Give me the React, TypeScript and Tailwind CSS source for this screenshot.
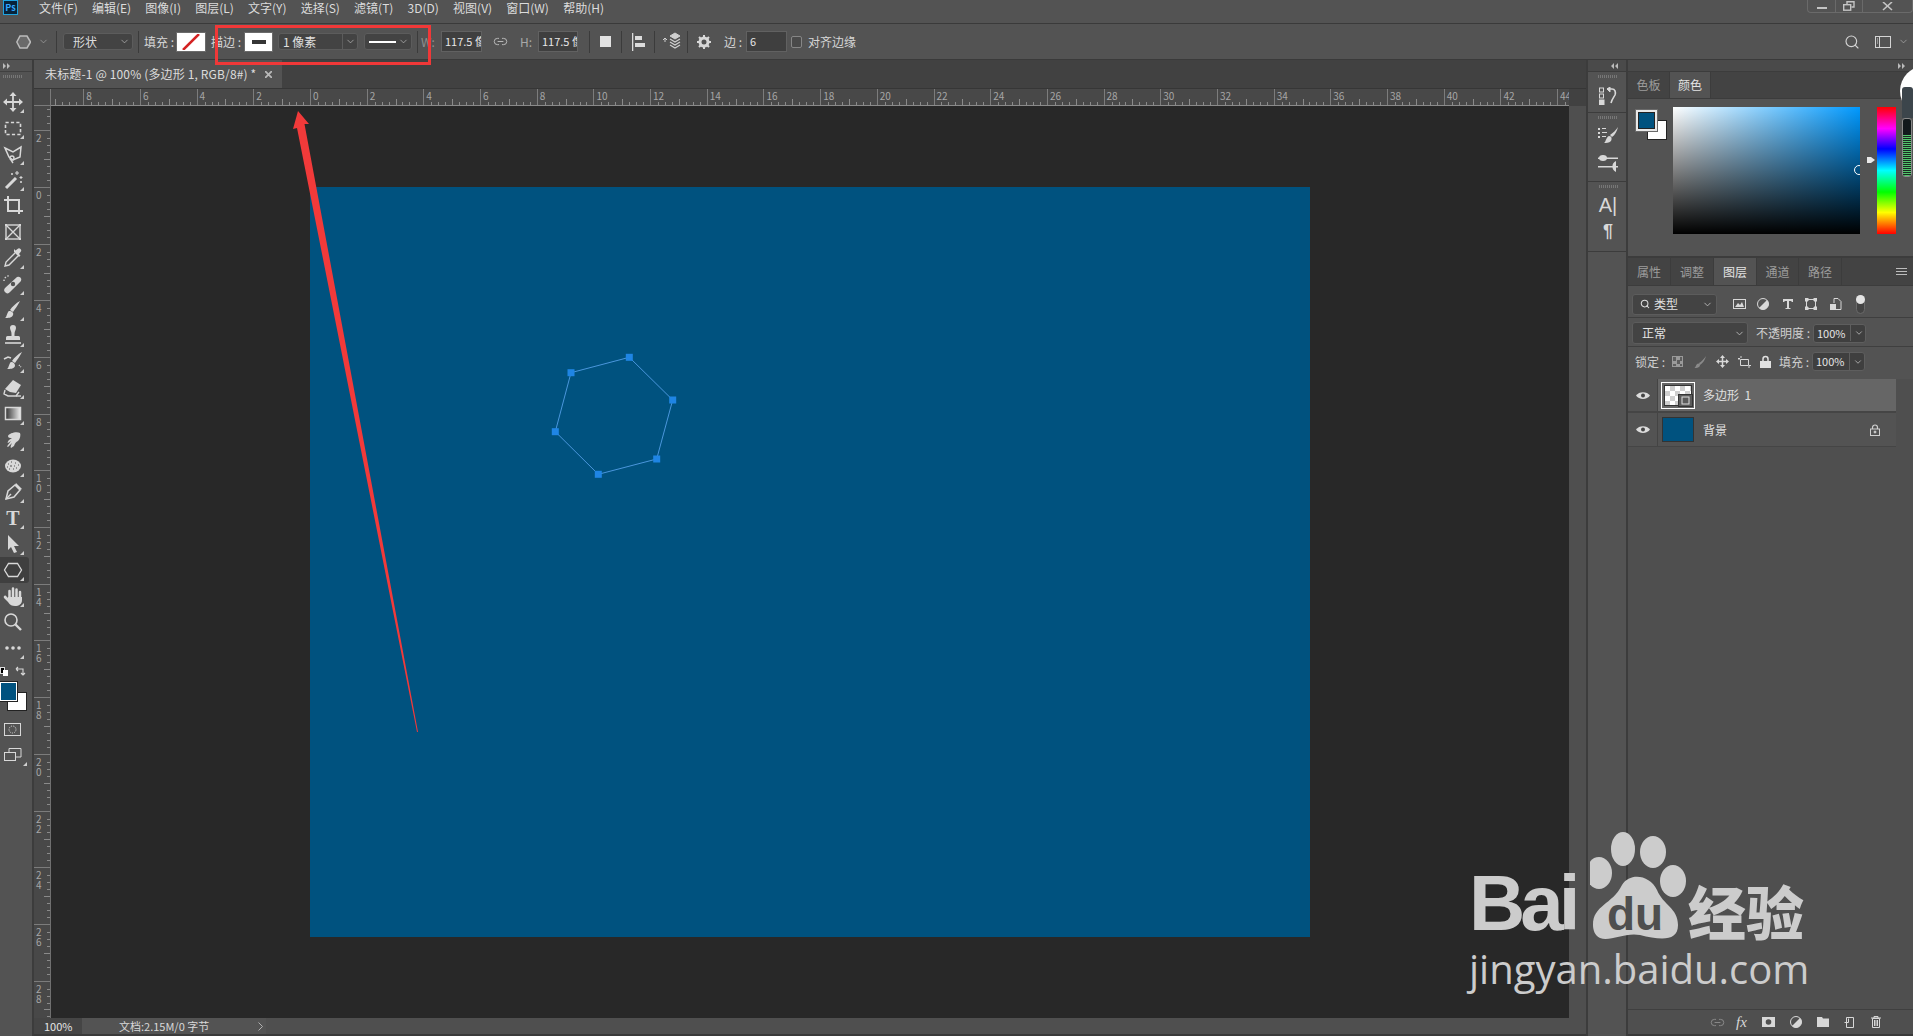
import React from "react";
import { ChevronDown, Link2, Search } from "lucide-react";

const FONT = "[font-family:'Noto_Sans_CJK_SC','Liberation_Sans',sans-serif]";

const S = ({ children, w = 26, h = 26, vb }: { children: React.ReactNode; w?: number; h?: number; vb?: string }) => (
  <svg width={w} height={h} viewBox={vb ?? `0 0 ${w} ${h}`} fill="none" stroke="currentColor" strokeWidth={1.4}>
    {children}
  </svg>
);

const tools: { k: string; c: React.ReactNode; tri?: boolean }[] = [
  { k: "move", tri: true, c: <><path d="M6 13h14M13 6v14" strokeWidth={1.8} /><path d="M13 3l-3.5 4h7zM13 23l-3.5-4h7zM3 13l4-3.5v7zM23 13l-4-3.5v7z" fill="currentColor" stroke="none" /></> },
  { k: "marquee", tri: true, c: <rect x="5.5" y="7.5" width="15" height="12" strokeDasharray="3.2 2.2" strokeWidth={1.6} /> },
  { k: "lasso", tri: true, c: <><path d="M5 7l8 4 8-5-1 10-7 3-4-3z" strokeWidth={1.5} /><circle cx="12" cy="17" r="2" /><path d="M11 19l2 3" /></> },
  { k: "wand", tri: true, c: <><path d="M6 21L16 11" strokeWidth={3} /><path d="M17 4v4M15 6h4M21 9v3M19.5 10.5h3M12 6v2M11 7h2M21 14v2M20 15h2" strokeWidth={1.1} /></> },
  { k: "crop", c: <path d="M4 7h15v14M8 3v15h15" strokeWidth={2} /> },
  { k: "frame", c: <><rect x="6" y="6" width="14" height="14" /><path d="M6 6l14 14M20 6L6 20" /><path d="M5 5h2v2H5zM19 5h2v2h-2zM5 19h2v2H5zM19 19h2v2h-2z" fill="currentColor" stroke="none" /></> },
  { k: "dropper", tri: true, c: <><path d="M15 8l-9 9-1 4 4-1 9-9" /><path d="M14 7l5 5 1.5-1.500-1.500-1.500 1.500-2a2 2 0 0 0-3-3l-2 1.500-1.500-1.500z" fill="currentColor" stroke="none" /></> },
  { k: "heal", tri: true, c: <><path d="M5 17L17 6a3 3 0 0 1 4 4L10 21a3 3 0 0 1-5-4z" fill="currentColor" stroke="none" /><circle cx="13" cy="13" r="2.200" fill="#535353" stroke="none" /><path d="M4 10a5 5 0 0 1 6-5" strokeDasharray="1.500 1.500" /></> },
  { k: "brush", tri: true, c: <path d="M20 4c-2 4-5 8-7 11l-3-2c2-3 6-7 10-9zM9 14c3 0 5 2 4 4-1 3-5 3-8 3 2-1 2-6 4-7z" fill="currentColor" stroke="none" /> },
  { k: "stamp", tri: true, c: <><path d="M10 5a3 3 0 0 1 6 0c0 2-1.500 3-1.500 6v2h4a1.500 1.500 0 0 1 1.500 1.500V17H6v-2.500A1.500 1.500 0 0 1 7.500 13h4v-2c0-3-1.500-4-1.500-6z" fill="currentColor" stroke="none" /><path d="M5 20h16" strokeWidth={1.600} /></> },
  { k: "history", tri: true, c: <><path d="M22 3c-2 4-5 8-7 11l-3-2c2-3 6-7 10-9zM11 13c3 0 4 2 4 4-1 3-5 3-8 3 2-1 2-6 4-7z" fill="currentColor" stroke="none" /><path d="M4 10l4-2 3 1" strokeWidth={1.600} /><path d="M19 16l2 2" strokeDasharray="1 1" /></> },
  { k: "eraser", tri: true, c: <><path d="M13 5l8 5-5 8-6-1-5-3z" fill="currentColor" stroke="none" /><path d="M5 15l-1 4 4 2h8l3-4" /><path d="M21 21h-5" /></> },
  { k: "gradient", tri: true, c: <><defs><linearGradient id="gr"><stop offset="0" stopColor="#333" /><stop offset="1" stopColor="#eee" /></linearGradient></defs><rect x="5.500" y="6.500" width="15" height="12" fill="url(#gr)" strokeWidth={1.500} /></> },
  { k: "smudge", tri: true, c: <path d="M8 9c1-3 9-5 12-3 1 2 0 6-2 8-2 1-3 2-4 5l-3 2c-1-1 0-3 1-5l-4 4c-1 0-1-1 0-2l3-4-3 2c-1 0 0-2 1-3l3-2c-2 0-4 0-4-2z" fill="currentColor" stroke="none" /> },
  { k: "sponge", tri: true, c: <><ellipse cx="13" cy="13" rx="8" ry="6.500" fill="currentColor" stroke="none" /><path d="M8 11h1M11 9h1M15 10h1M18 12h1M7 14h1M10 13h2M14 13h1M9 16h1M13 16h1M16 15h1" stroke="#535353" strokeWidth={1.100} /></> },
  { k: "pen", tri: true, c: <><path d="M6 20l2-8 7-6 5 5-6 7z" strokeWidth={1.500} /><path d="M16 4l6 6-2 1-5-5z" fill="currentColor" stroke="none" /><path d="M6 20l5-5" /></> },
  { k: "text", tri: true, c: <text x="13" y="20" textAnchor="middle" fontSize="20" fontWeight="700" fill="currentColor" stroke="none" fontFamily="Liberation Serif">T</text> },
  { k: "select", tri: true, c: <path d="M8 4l11 11h-5l3 6-3 1-3-6-3 3z" fill="currentColor" stroke="none" /> },
  { k: "shape", tri: true, c: <path d="M8.500 6.500h9l4 6.500-4 6.500h-9L4.500 13z" strokeWidth={1.300} /> },
  { k: "hand", tri: true, c: <><path d="M9.500 8v7M13 5.500V14M16.500 6.500V14M20 9v7" strokeWidth={2.500} strokeLinecap="round" /><path d="M8 14h14v3c0 4-3 6-7 6-3 0-5-1-7-4l-4-4c-1-2 1-3 2-2l2 2z" fill="currentColor" stroke="none" /></> },
  { k: "zoom", c: <><circle cx="11" cy="11" r="6" strokeWidth={1.600} /><path d="M15.500 15.500L21 21" strokeWidth={2.400} /></> },
  { k: "more", tri: true, c: <><circle cx="7" cy="13" r="1.800" fill="currentColor" stroke="none" /><circle cx="13" cy="13" r="1.800" fill="currentColor" stroke="none" /><circle cx="19" cy="13" r="1.800" fill="currentColor" stroke="none" /></> },
];

const Triangle = () => (
  <svg width="4" height="4" viewBox="0 0 4 4" className="absolute right-[5px] bottom-[2px] text-[#cfcfcf]">
    <path d="M4 0v4H0z" fill="currentColor" />
  </svg>
);

const Toolbar = () => (
  <div className="w-[32px] shrink-0 bg-[#535353] border-r-2 border-[#3c3c3c] box-content flex flex-col text-[#d8d8d8]">
    <div className="h-[12px] border-b border-[#404040] flex items-center pl-[3px] text-[#bbbbbb]">
      <svg width="8" height="6" viewBox="0 0 8 6"><path d="M0 0l3 3-3 3zM4 0l3 3-3 3z" fill="currentColor" /></svg>
    </div>
    <div className="h-[17px] pt-[3px] pl-[3px]">
      <div className="h-[3px] w-[19px] bg-[repeating-linear-gradient(90deg,#777_0_1px,transparent_1px_2px)]" />
    </div>
    {tools.map((t) => (
      <div key={t.k} className={`relative h-[26px] w-[29px] flex items-center justify-start ${t.k === "shape" ? "bg-[#3f3f3f] rounded-r-[3px]" : ""}`}>
        <S>{t.c}</S>
        {t.tri && <Triangle />}
      </div>
    ))}
    <div className="relative h-[50px] w-[32px]">
      <div className="absolute left-0 top-[6px] w-[5px] h-[7px] bg-black border border-[#dddddd]" />
      <div className="absolute left-[3px] top-[9px] w-[5px] h-[6px] bg-white" />
      <svg width="11" height="11" viewBox="0 0 11 11" className="absolute left-[15px] top-[5px]" fill="none" stroke="currentColor" strokeWidth={1.100}>
        <path d="M1 3h7v6M1 3l2-2M1 3l2 2M8 9L6 7M8 9l2-2" />
      </svg>
      <div className="absolute left-[7px] top-[31px] w-[20px] h-[19px] bg-white border border-[#222222]" />
      <div className="absolute left-0 top-[21px] w-[17px] h-[19px] bg-[#00527f] border border-white outline outline-[#222222]" />
    </div>
    <div className="mt-[6px] h-[26px] flex items-center pl-[4px]">
      <svg width="18" height="14" viewBox="0 0 18 14" fill="none" stroke="currentColor"><rect x=".5" y=".5" width="16" height="12" /><circle cx="8.500" cy="6.500" r="3.500" strokeDasharray="1.200 1.200" /></svg>
    </div>
    <div className="relative h-[26px] flex items-center pl-[4px] -mt-[1px]">
      <svg width="18" height="14" viewBox="0 0 18 14" fill="none" stroke="currentColor"><rect x=".5" y="4.500" width="11" height="8" /><path d="M5 4V.5h12V9h-5" /></svg>
      <Triangle />
    </div>
  </div>
);

const Sep = ({ cls }: { cls: string }) => <div className={`w-px h-[22px] bg-[#3b3b3b] shrink-0 ${cls}`} />;

const OptSelect = ({ cls, children, split }: { cls: string; children?: React.ReactNode; split?: boolean }) => (
  <div className={`h-[17px] shrink-0 rounded-[3px] bg-[#434343] border border-[#5c5c5c] flex items-center ${cls}`}>
    <div className="flex-1 min-w-0 flex items-center pl-[4px] overflow-hidden">{children}</div>
    <div className={`w-[15px] h-full flex items-center justify-center text-[#bdbdbd] ${split ? "border-l border-[#5c5c5c]" : ""}`}>
      <ChevronDown size={11} strokeWidth={1.500} />
    </div>
  </div>
);

const NumInput = ({ cls, v }: { cls: string; v: string }) => (
  <div className={`h-[21px] shrink-0 bg-[#3f3f3f] border border-[#616161] flex items-center pl-[3px] overflow-hidden whitespace-nowrap text-[11px] text-[#e6e6e6] ${cls}`}>
    {v}
  </div>
);

const menu = ["文件(F)", "编辑(E)", "图像(I)", "图层(L)", "文字(Y)", "选择(S)", "滤镜(T)", "3D(D)", "视图(V)", "窗口(W)", "帮助(H)"];

const MenuBar = () => (
  <div className="h-[24px] shrink-0 bg-[#535353] border-b border-[#3a3a3a] flex items-start relative">
    <div className="ml-[3px] w-[15px] h-[15px] border border-[#1fa3e0] bg-[#07233a] flex items-center justify-center text-[9px] leading-none font-bold text-[#31a8ff]">Ps</div>
    <div className="ml-[21px] flex items-center gap-[14.200px] h-[15px] text-[12px] leading-none text-[#dcdcdc]">
      {menu.map((m) => <span key={m}>{m}</span>)}
    </div>
    <div className="ml-auto w-[106px] h-[13px] border border-t-0 border-[#6a6a6a] rounded-b-[4px] flex text-[#c4c4c4]">
      <div className="w-[28px] border-r border-[#6a6a6a] flex items-center justify-center">
        <div className="w-[10px] h-[2px] bg-current mt-[3px]" />
      </div>
      <div className="w-[27px] border-r border-[#6a6a6a] flex items-center justify-center">
        <svg width="12" height="10" viewBox="0 0 12 10" fill="none" stroke="currentColor" strokeWidth={1.400}><rect x=".7" y="3.700" width="7" height="5.500" /><path d="M4 3V.7h7V6H8.500" /></svg>
      </div>
      <div className="flex-1 flex items-center justify-center">
        <svg width="11" height="9" viewBox="0 0 11 9" fill="none" stroke="currentColor" strokeWidth={1.600}><path d="M1 0l9 8M10 0L1 8" /></svg>
      </div>
    </div>
  </div>
);

const OptionsBar = () => (
  <div className="h-[36px] shrink-0 bg-[#535353] border-b border-[#3a3a3a] flex items-center text-[12px] text-[#d6d6d6]">
    <svg width="15" height="14" viewBox="0 0 15 14" className="ml-[16px] shrink-0 text-[#bcbcbc]" fill="none" stroke="currentColor" strokeWidth={1.500}>
      <path d="M4 1h7l3.500 6-3.500 6H4L.8 7z" fill="#6a6a6a" />
    </svg>
    <ChevronDown size={11} strokeWidth={1.500} className="ml-[7px] text-[#a8a8a8] shrink-0" />
    <Sep cls="ml-[7px]" />
    <OptSelect cls="ml-[6px] w-[70px]"><span className="text-[#dcdcdc] pl-[5px]">形状</span></OptSelect>
    <Sep cls="ml-[5px]" />
    <span className="ml-[5px] w-[32px] shrink-0 whitespace-nowrap">填充 :</span>
    <div className="w-[30px] h-[20px] shrink-0 border border-[#6b6b6b] bg-white p-px">
      <svg width="26" height="16" viewBox="0 0 26 16"><path d="M5 16L21 0" stroke="#d32222" strokeWidth={2.500} /></svg>
    </div>
    <span className="ml-[5px] w-[33px] shrink-0 whitespace-nowrap">描边 :</span>
    <div className="w-[29px] h-[20px] shrink-0 border border-[#6b6b6b] bg-white flex items-center justify-center">
      <div className="w-[14px] h-[4px] bg-[#353535]" />
    </div>
    <OptSelect cls="ml-[5px] w-[80px]" split><span className="text-[#e0e0e0]">1 像素</span></OptSelect>
    <OptSelect cls="ml-[6px] w-[48px]"><div className="w-[29px] h-[2px] bg-white" /></OptSelect>
    <Sep cls="ml-[5px]" />
    <span className="ml-[3px] w-[20px] shrink-0 text-[#8f8f8f]">W:</span>
    <NumInput cls="w-[41px]" v="117.5 像素" />
    <Link2 size={15} strokeWidth={1.500} className="ml-[11px] text-[#bdbdbd] shrink-0" />
    <span className="ml-[12px] w-[18px] shrink-0 text-[#a8a8a8]">H:</span>
    <NumInput cls="w-[40px]" v="117.5 像素" />
    <Sep cls="ml-[11px]" />
    <div className="relative ml-[10px] w-[11px] h-[11px] bg-[#e2e2e2] shrink-0" />
    <Sep cls="ml-[10px]" />
    <svg width="14" height="18" viewBox="0 0 14 18" className="ml-[10px] shrink-0 text-[#dcdcdc]" fill="currentColor"><path d="M0 0h1.300v18H0zM3 3h7v4H3zM3 10h10v4H3z" /></svg>
    <Sep cls="ml-[8px]" />
    <svg width="19" height="20" viewBox="0 0 19 20" className="ml-[7px] shrink-0 text-[#cfcfcf]" fill="none" stroke="currentColor"><path d="M3 6v4M1 8l2-2 2 2" /><path d="M13 1l5 3-5 3-5-3z" fill="currentColor" /><path d="M8 7l5 3 5-3M8 10l5 3 5-3M8 13l5 3 5-3" strokeWidth={1.300} /></svg>
    <Sep cls="ml-[6px]" />
    <svg width="14" height="14" viewBox="0 0 14 14" className="ml-[9px] shrink-0 text-[#d8d8d8]"><circle cx="7" cy="7" r="4" fill="none" stroke="currentColor" strokeWidth={3} /><path d="M7 0v3M7 11v3M0 7h3M11 7h3M2 2l2 2M10 10l2 2M12 2l-2 2M4 10l-2 2" stroke="currentColor" strokeWidth={2} /></svg>
    <span className="ml-[13px] w-[22px] shrink-0 whitespace-nowrap">边 :</span>
    <NumInput cls="w-[41px]" v="6" />
    <div className="ml-[4px] w-[11px] h-[12px] rounded-[2px] border border-[#868686] bg-[#4a4a4a] shrink-0" />
    <span className="ml-[6px] whitespace-nowrap">对齐边缘</span>
    <Search size={16} strokeWidth={1.700} className="ml-auto text-[#d4d4d4] shrink-0" />
    <svg width="16" height="12" viewBox="0 0 16 12" className="ml-[15px] shrink-0 text-[#d4d4d4]" fill="none" stroke="currentColor"><rect x=".5" y=".5" width="15" height="11" /><path d="M4.500 1v10" /><path d="M2 3h1M2 5h1M2 7h1" /></svg>
    <ChevronDown size={11} strokeWidth={1.500} className="ml-[7px] mr-[4px] text-[#b0b0b0] shrink-0" />
  </div>
);

const Ticks = ({ vertical }: { vertical?: boolean }) => (
  <div className={vertical ? "w-[6px] h-full flex flex-col" : "h-[6px] w-full flex"}>
    {[0, 1, 2, 3, 4, 5, 6, 7].map((i) => (
      <div key={i} className="flex-1 relative">
        {i > 0 && (
          <div className={vertical
            ? `absolute top-0 right-0 h-px bg-[#8a8a8a] ${i === 4 ? "w-[6px]" : "w-[3px]"}`
            : `absolute left-0 bottom-0 w-px bg-[#8a8a8a] ${i === 4 ? "h-[6px]" : "h-[3px]"}`} />
        )}
      </div>
    ))}
  </div>
);

const hLabels = ["", "8", "6", "4", "2", "0", "2", "4", "6", "8", "10", "12", "14", "16", "18", "20", "22", "24", "26", "28", "30", "32", "34", "36", "38", "40", "42", "44"];
const vLabels = ["", "2", "0", "2", "4", "6", "8", "10", "12", "14", "16", "18", "20", "22", "24", "26", "28", ""];

const HRuler = () => (
  <div className="flex-1 min-w-0 overflow-hidden bg-[#484848] border-b border-[#8a8a8a] flex">
    <div className="flex -ml-[24.5px]">
      {hLabels.map((l, i) => (
        <div key={i} className="w-[56.7px] shrink-0 border-l border-[#7c7c7c] flex flex-col justify-between">
          <span className="text-[10px] leading-[11px] pl-[2px] pt-px text-[#a6a6a6]">{l}</span>
          <Ticks />
        </div>
      ))}
    </div>
  </div>
);

const VRuler = () => (
  <div className="w-[17px] shrink-0 overflow-hidden bg-[#484848] border-r border-[#6f6f6f]">
    <div className="-mt-[32.4px]">
      {vLabels.map((l, i) => (
        <div key={i} className="h-[56.7px] border-t border-[#7c7c7c] flex justify-between">
          <span className="w-[9px] break-all text-[10px] leading-[10px] pl-[2px] pt-[2px] text-[#a6a6a6]">{l}</span>
          <Ticks vertical />
        </div>
      ))}
    </div>
  </div>
);

const pts = [[319.3, 170.3], [362.7, 213], [346.7, 272], [288.3, 287.3], [245.3, 244.7], [261, 185.7]];

const Doc = () => (
  <div className="w-[1552px] shrink-0 flex flex-col">
    <div className="h-[29px] shrink-0 bg-[#414141] border-b border-[#363636]">
      <div className="w-[248px] h-full bg-[#535353] flex items-center pl-[11px] text-[12px] text-[#dcdcdc] whitespace-nowrap">
        <span className="w-[215px] overflow-hidden tracking-[0.15px]">未标题-1 @ 100% (多边形 1, RGB/8#) *</span>
        <svg width="7" height="7" viewBox="0 0 7 7" className="ml-[5px] text-[#b8b8b8]" stroke="currentColor" strokeWidth={1.800}><path d="M0 0l7 7M7 0L0 7" /></svg>
      </div>
    </div>
    <div className="h-[17px] shrink-0 flex bg-[#414141]">
      <div className="w-[17px] shrink-0 bg-[#484848] border-b border-r border-[#7a7a7a]" />
      <HRuler />
      <div className="w-[17px] shrink-0" />
    </div>
    <div className="flex-1 min-h-0 flex">
      <VRuler />
      <div className="w-[1518px] shrink-0 bg-[#282828] pl-[259px] pt-[81px] overflow-hidden">
        <div className="relative w-[1000px] h-[750px] bg-[#00527f]">
          <svg width="1000" height="750" className="absolute inset-0">
            <polygon points={pts.map((p) => p.join(",")).join(" ")} fill="none" stroke="#4a96dc" strokeWidth={1} />
            {pts.map(([x, y]) => (
              <rect key={x} x={x - 3.5} y={y - 3.5} width="7" height="7" fill="#1f85e4" />
            ))}
          </svg>
        </div>
      </div>
      <div className="w-[17px] shrink-0 bg-[#4f4f4f]" />
    </div>
    <div className="h-[16px] shrink-0 flex text-[11px] text-[#d8d8d8] bg-[#4f4f4f]">
      <div className="w-[48px] bg-[#454545] pl-[10px] flex items-center text-[#e4e4e4]">100%</div>
      <div className="w-[184px] bg-[#535353] pl-[37px] flex items-center whitespace-nowrap">
        <span className="w-[102px]">文档:2.15M/0 字节</span>
        <svg width="5" height="9" viewBox="0 0 5 9" className="ml-[37px] text-[#b0b0b0]" fill="none" stroke="currentColor"><path d="M.5.5l4 4-4 4" /></svg>
      </div>
    </div>
    <div className="h-[2px] shrink-0 bg-[#3a3a3a]" />
  </div>
);

const Grip = () => <div className="mx-auto mt-[3px] h-[3px] w-[19px] bg-[repeating-linear-gradient(90deg,#777_0_1px,transparent_1px_2px)]" />;

const Dock = () => (
  <div className="w-[38px] shrink-0 border-l-2 border-r-2 box-content border-[#3c3c3c] bg-[#535353] flex flex-col text-[#d8d8d8]">
    <div className="h-[12px] bg-[#4a4a4a] border-b border-[#3c3c3c] flex items-center justify-end pr-[7px] text-[#bbbbbb]">
      <svg width="8" height="6" viewBox="0 0 8 6"><path d="M3 0L0 3l3 3zM7 0L4 3l3 3z" fill="currentColor" /></svg>
    </div>
    <div className="h-[41px] border-b border-[#3c3c3c]">
      <Grip />
      <div className="flex justify-center mt-[9px] pl-[2px]">
        <svg width="18" height="18" viewBox="0 0 18 18" fill="none" stroke="currentColor"><rect x=".5" y="1" width="4" height="4" /><rect x=".5" y="7" width="4" height="4" /><rect x="0" y="13" width="5" height="5" fill="currentColor" /><path d="M8 2h5c3 0 4 3 3 6-1 2-3 4-4 8" strokeWidth={1.600} /><path d="M8 2l3-2v5z" fill="currentColor" /></svg>
      </div>
    </div>
    <div className="h-[69px] border-b border-[#3c3c3c]">
      <Grip />
      <div className="flex justify-center mt-[8px] pl-[2px]">
        <svg width="21" height="17" viewBox="0 0 21 17" fill="currentColor"><path d="M0 1h2v2H0zM4 1h4v1H4zM0 5h2v2H0zM4 5h5v1H4zM0 9h2v2H0zM4 9h4v1H4z" /><path d="M20 0c-2 3-5 6-8 8l2 2c3-2 5-6 6-10zM11 9c3 0 3 3 2 5-2 2-5 2-7 2 2-1 2-6 5-7z" /></svg>
      </div>
      <div className="flex justify-center mt-[11px] pl-[2px]">
        <svg width="20" height="17" viewBox="0 0 20 17" fill="currentColor"><path d="M0 2.500h20v1.500H0zM0 11h20v1.500H0z" /><ellipse cx="5" cy="3" rx="4" ry="3" /><path d="M18 6a6 6 0 0 0 0 11z" /></svg>
      </div>
    </div>
    <div className="h-[70px] border-b border-[#3c3c3c] pl-[2px]">
      <Grip />
      <div className="flex justify-center mt-[6px] text-[20px] leading-[22px] [font-family:'Liberation_Sans',sans-serif]"><span>A</span><span className="font-thin">|</span></div>
      <div className="flex justify-center mt-[6px] text-[18px] leading-[18px] font-bold [font-family:'Liberation_Sans',sans-serif]">¶</div>
    </div>
  </div>
);

const Tab = ({ t, active, w }: { t: string; active?: boolean; w: string }) => (
  <div className={`${w} h-full flex items-center justify-center text-[12px] border-r border-[#3c3c3c] ${active ? "bg-[#535353] text-[#e4e4e4]" : "text-[#9c9c9c]"}`}>{t}</div>
);

const Menu3 = () => (
  <svg width="11" height="8" viewBox="0 0 11 8" className="text-[#bdbdbd]" fill="currentColor"><path d="M0 0h11v1H0zM0 3h11v1H0zM0 6h11v1H0z" /></svg>
);

const Field = ({ v }: { v: string }) => (
  <div className="w-[53px] h-[19px] shrink-0 rounded-[3px] bg-[#3f3f3f] border border-[#5e5e5e] flex items-center text-[11px] text-[#e4e4e4]">
    <span className="w-[37px] pl-[3px] border-r border-[#5e5e5e]">{v}</span>
    <ChevronDown size={10} className="ml-[3px] text-[#b8b8b8]" />
  </div>
);

const Eye = () => (
  <svg width="14" height="9" viewBox="0 0 14 9"><path d="M0 4.500C3 0 11 0 14 4.500 11 9 3 9 0 4.500z" fill="#dcdcdc" /><circle cx="7" cy="4.500" r="2" fill="#444" /></svg>
);

const Panels = () => (
  <div className="flex-1 min-w-0 flex flex-col bg-[#4f4f4f] text-[#d6d6d6] relative">
    <div className="h-[12px] shrink-0 bg-[#4a4a4a] border-b border-[#3c3c3c] flex items-center justify-end pr-[7px] text-[#bbbbbb]">
      <svg width="8" height="6" viewBox="0 0 8 6"><path d="M0 0l3 3-3 3zM4 0l3 3-3 3z" fill="currentColor" /></svg>
    </div>
    <div className="h-[27px] shrink-0 bg-[#434343] flex border-b border-[#3c3c3c]">
      <Tab t="色板" w="w-[42px]" />
      <Tab t="颜色" w="w-[41px]" active />
    </div>
    <div className="h-[159px] shrink-0 bg-[#535353] border-b-2 border-[#3c3c3c] flex items-start pt-[8px]">
      <div className="relative ml-[8px] w-[31px] h-[33px]">
        <div className="absolute left-[11px] top-[13px] w-[20px] h-[20px] bg-white border border-[#222222]" />
        <div className="absolute left-0 top-[3px] w-[21px] h-[21px] bg-[#00527f] border-2 border-[#e8e8e8] outline outline-[#6a6a6a] ring-1 ring-inset ring-[#222222]" />
      </div>
      <div className="relative ml-[6px] w-[187px] h-[127px] overflow-hidden bg-[linear-gradient(to_right,#ffffff,#0099ff)]">
        <div className="w-full h-full bg-[linear-gradient(to_bottom,transparent,#000000)]" />
        <div className="absolute left-[181px] top-[58px] w-[10px] h-[10px] rounded-full border border-white" />
      </div>
      <div className="relative ml-[17px] w-[19px] h-[127px] bg-[linear-gradient(to_bottom,#ff0000,#ff00ff_17%,#0000ff_33%,#00ffff_50%,#00ff00_67%,#ffff00_83%,#ff0000)]">
        <svg width="8" height="8" viewBox="0 0 8 8" className="absolute -left-[10px] top-[49px] text-[#e8e8e8]"><path d="M0 1h4l4 3-4 3H0z" fill="currentColor" /></svg>
      </div>
    </div>
    <div className="h-[28px] shrink-0 bg-[#434343] flex border-b border-[#3c3c3c] items-stretch">
      <Tab t="属性" w="w-[43px]" />
      <Tab t="调整" w="w-[43px]" />
      <Tab t="图层" w="w-[43px]" active />
      <Tab t="通道" w="w-[42px]" />
      <Tab t="路径" w="w-[43px]" />
      <div className="flex-1 flex items-center justify-end pr-[6px]"><Menu3 /></div>
    </div>
    <div className="h-[32px] shrink-0 bg-[#535353] border-b border-[#3f3f3f] flex items-center pt-[5px]">
      <div className="ml-[4px] w-[85px] h-[21px] rounded-[3px] bg-[#434343] border border-[#5c5c5c] flex items-center pl-[7px] text-[12px] text-[#e0e0e0]">
        <Search size={10} strokeWidth={2.500} className="text-[#e0e0e0]" />
        <span className="ml-[4px]">类型</span>
        <ChevronDown size={11} className="ml-auto mr-[3px] text-[#b8b8b8]" />
      </div>
      <svg width="13" height="10" viewBox="0 0 13 10" className="ml-[16px] text-[#d8d8d8]" fill="none" stroke="currentColor"><rect x=".5" y=".5" width="12" height="9" /><path d="M2 8l3-4 2 2 2-3 2 5z" fill="currentColor" stroke="none" /></svg>
      <svg width="12" height="12" viewBox="0 0 12 12" className="ml-[11px] text-[#d8d8d8]"><circle cx="6" cy="6" r="5.500" fill="none" stroke="currentColor" /><path d="M10 2L2 10a5.500 5.500 0 0 0 8-8z" fill="currentColor" /></svg>
      <svg width="12" height="12" viewBox="0 0 12 12" className="ml-[13px] text-[#d8d8d8]" fill="currentColor"><path d="M1 1h10v3h-1l-1-1H7v7h1.500v1h-5v-1H5V3H3L2 4H1z" /></svg>
      <svg width="12" height="12" viewBox="0 0 12 12" className="ml-[11px] text-[#d8d8d8]" fill="none" stroke="currentColor"><rect x="1.500" y="1.500" width="9" height="9" /><path d="M0 0h3v3H0zM9 0h3v3H9zM0 9h3v3H0zM9 9h3v3H9z" fill="currentColor" /></svg>
      <svg width="12" height="12" viewBox="0 0 12 12" className="ml-[13px] text-[#d8d8d8]" fill="none" stroke="currentColor"><path d="M4 5V.5h4l3 3v8H6" /><rect x="0" y="6" width="6" height="6" fill="currentColor" stroke="none" /></svg>
      <div className="ml-[14px] w-[9px] h-[19px] rounded-full bg-[#444444] border border-[#6a6a6a] relative">
        <div className="absolute -left-px -top-px w-[9px] h-[9px] rounded-full bg-[#e4e4e4]" />
      </div>
    </div>
    <div className="h-[29px] shrink-0 bg-[#535353] border-b border-[#3f3f3f] flex items-center pt-[2px] text-[12px]">
      <div className="ml-[4px] w-[116px] h-[22px] rounded-[3px] bg-[#434343] border border-[#5c5c5c] flex items-center pl-[9px] text-[#e4e4e4]">
        正常
        <ChevronDown size={11} className="ml-auto mr-[2px] text-[#b8b8b8]" />
      </div>
      <span className="ml-[8px] w-[57px] whitespace-nowrap text-[#cfcfcf]">不透明度 :</span>
      <Field v="100%" />
    </div>
    <div className="h-[32px] shrink-0 bg-[#535353] flex items-center pb-[3px] text-[12px]">
      <span className="ml-[7px] w-[37px] whitespace-nowrap text-[#cfcfcf]">锁定 :</span>
      <div className="w-[11px] h-[11px] bg-[repeating-conic-gradient(#9a9a9a_0_25%,#5e5e5e_0_50%)] bg-[length:7px_7px] border border-[#9a9a9a]" />
      <svg width="12" height="12" viewBox="0 0 12 12" className="ml-[11px] text-[#8a8a8a]" fill="currentColor"><path d="M12 0C10 3 7 6 5 7l1 2c3-2 5-5 6-9zM4 7.500c2 0 2.500 2 1.500 3-1 1-3 1.500-5 1.500 1.500-1 1.500-4 3.500-4.500z" /></svg>
      <svg width="13" height="13" viewBox="0 0 13 13" className="ml-[10px] text-[#d8d8d8]"><path d="M6.500 2v9M2 6.500h9" stroke="currentColor" strokeWidth={1.500} /><path d="M6.500 0L4 3h5zM6.500 13L4 10h5zM0 6.500L3 4v5zM13 6.500L10 4v5z" fill="currentColor" /></svg>
      <svg width="13" height="12" viewBox="0 0 13 12" className="ml-[9px] text-[#d8d8d8]" fill="none" stroke="currentColor"><path d="M2.500 3.500h8v6h-8zM0 2.500h2M3 0v2M11 10v2M11 9.500h2M0 3l2 0" /></svg>
      <svg width="11" height="13" viewBox="0 0 11 13" className="ml-[9px] text-[#e0e0e0]"><path d="M3 6V4a2.500 2.500 0 0 1 5 0v2" fill="none" stroke="currentColor" strokeWidth={1.500} /><path d="M0 6h11v7H0z" fill="currentColor" /></svg>
      <span className="ml-[8px] w-[33px] whitespace-nowrap text-[#cfcfcf]">填充 :</span>
      <Field v="100%" />
    </div>
    <div className="h-[34px] shrink-0 w-[268px] bg-[#666666] border-b-2 border-[#454545] flex items-center">
      <div className="w-[30px] h-full bg-[#535353] border-r border-[#444444] flex items-center justify-center"><Eye /></div>
      <div className="relative ml-[3px] w-[34px] h-[27px] border border-white">
        <div className="absolute inset-[2px] bg-[repeating-conic-gradient(#cfcfcf_0_25%,#ffffff_0_50%)] bg-[length:10px_10px] border border-[#333333]" />
        <div className="absolute right-[1px] bottom-[1px] w-[15px] h-[13px] bg-[#5a5a5a] border border-[#333333] flex items-center justify-center">
          <svg width="9" height="9" viewBox="0 0 9 9" fill="none" stroke="#dddddd"><rect x="1" y="1" width="7" height="7" /></svg>
        </div>
      </div>
      <span className="ml-[8px] text-[12px] text-[#e0e0e0] whitespace-pre">多边形  1</span>
    </div>
    <div className="h-[34px] shrink-0 w-[268px] bg-[#535353] border-b border-[#454545] flex items-center">
      <div className="w-[30px] h-full border-r border-[#444444] flex items-center justify-center"><Eye /></div>
      <div className="ml-[4px] w-[32px] h-[25px] bg-[#00527f] border border-[#333333]" />
      <span className="ml-[9px] text-[12px] text-[#e0e0e0]">背景</span>
      <svg width="10" height="12" viewBox="0 0 10 12" className="ml-auto mr-[16px] text-[#cfcfcf]" fill="none" stroke="currentColor"><path d="M2.500 5V3.500a2.500 2.500 0 0 1 5 0V5" strokeWidth={1.200} /><rect x=".5" y="5" width="9" height="6.500" /><circle cx="5" cy="8" r="1" fill="currentColor" /></svg>
    </div>
    <div className="flex-1" />
    <div className="h-[25px] shrink-0 border-t border-[#3f3f3f] flex items-center text-[#d8d8d8] pl-[82px]">
      <Link2 size={15} strokeWidth={1.500} className="text-[#8c8c8c]" />
      <span className="ml-[11px] w-[14px] italic text-[15px] leading-none [font-family:'Liberation_Serif',serif]">fx</span>
      <svg width="13" height="10" viewBox="0 0 13 10" className="ml-[12px]"><path d="M0 0h13v10H0z" fill="currentColor" /><circle cx="6.500" cy="5" r="2.800" fill="#4f4f4f" /></svg>
      <svg width="12" height="12" viewBox="0 0 12 12" className="ml-[15px]"><circle cx="6" cy="6" r="5.500" fill="none" stroke="currentColor" /><path d="M10 2L2 10a5.500 5.500 0 0 0 8-8z" fill="currentColor" /></svg>
      <svg width="12" height="10" viewBox="0 0 12 10" className="ml-[15px]"><path d="M0 0h5l1 1.500h6V10H0z" fill="currentColor" /></svg>
      <svg width="10" height="11" viewBox="0 0 10 11" className="ml-[15px]" fill="none" stroke="currentColor"><path d="M2.500.5h7v10h-7zM.5 5.500h4v-4" /></svg>
      <svg width="10" height="12" viewBox="0 0 10 12" className="ml-[17px]" fill="none" stroke="currentColor"><path d="M0 2h10M3 2V.5h4V2M1.500 2.500h7V11.500h-7zM3.500 4v6M5 4v6M6.500 4v6" /></svg>
    </div>
    <div className="h-[2px] shrink-0 bg-[#3a3a3a]" />
  </div>
);

const Watermark = () => (
  <div className="absolute left-[1460px] top-[830px] w-[360px] h-[170px] text-[#cccccc] pointer-events-none">
    <span className="absolute left-[9px] top-[38px] text-[78px] leading-[70px] font-bold tracking-[-5px] [font-family:'Liberation_Sans',sans-serif]">Bai</span>
    <svg width="100" height="115" viewBox="1590 830 100 115" className="absolute left-[130px] top-0">
      <ellipse cx="1623" cy="849" rx="12" ry="17" fill="currentColor" />
      <ellipse cx="1653" cy="852" rx="13" ry="16" fill="currentColor" />
      <ellipse cx="1599" cy="873" rx="13" ry="16" fill="currentColor" />
      <ellipse cx="1673" cy="881" rx="13" ry="16" fill="currentColor" />
      <path d="M1593 925C1593 905 1612 905 1622 885C1630 872 1650 875 1657 890C1663 905 1678 908 1678 925C1678 942 1660 940 1640 935C1625 932 1610 942 1600 938C1595 936 1593 930 1593 925z" fill="currentColor" />
      <text x="1635" y="930" textAnchor="middle" fontSize="46" fontWeight="700" fill="#4f4f4f" fontFamily="Liberation Sans">du</text>
    </svg>
    <span className="absolute left-[228px] top-[44px] text-[58px] leading-[72px] font-black whitespace-nowrap [font-family:'Noto_Sans_CJK_SC',sans-serif]">经验</span>
    <span className="absolute left-[9px] top-[117px] text-[40px] leading-[44px] whitespace-nowrap [font-family:'Open_Sans',sans-serif]">jingyan.baidu.com</span>
  </div>
);

export default function App() {
  return (
    <div className={`relative w-screen h-screen overflow-hidden flex flex-col bg-[#535353] ${FONT}`}>
      <MenuBar />
      <OptionsBar />
      <div className="flex-1 min-h-0 flex">
        <Toolbar />
        <Doc />
        <Dock />
        <Panels />
      </div>

      {/* red annotations */}
      <div className="absolute left-[215px] top-[25px] w-[216px] h-[40px] border-[3px] border-[#f03838]" />
      <svg width="140" height="640" viewBox="290 105 140 640" className="absolute left-[290px] top-[105px]">
        <path d="M298 111L309 124L304.500 124L418 732L417 732L297 128L293 129z" fill="#f23a3a" />
      </svg>

      {/* floating meter widget */}
      <div className="absolute left-[1900px] top-[66px] w-[50px] h-[50px] rounded-full bg-white" />
      <div className="absolute left-[1902px] top-[87px] w-[11px] h-[31px] rounded-t-[3px] bg-[#3c454b]" />
      <div className="absolute left-[1902px] top-[118px] w-[10px] h-[59px] rounded-[3px] bg-[#12191c] border border-[#8a8a8a] overflow-hidden flex flex-col justify-end">
        <div className="h-[41px] bg-[repeating-linear-gradient(to_bottom,#53c46b_0_1px,#1a2a22_1px_2px)]" />
      </div>

      <Watermark />
    </div>
  );
}
